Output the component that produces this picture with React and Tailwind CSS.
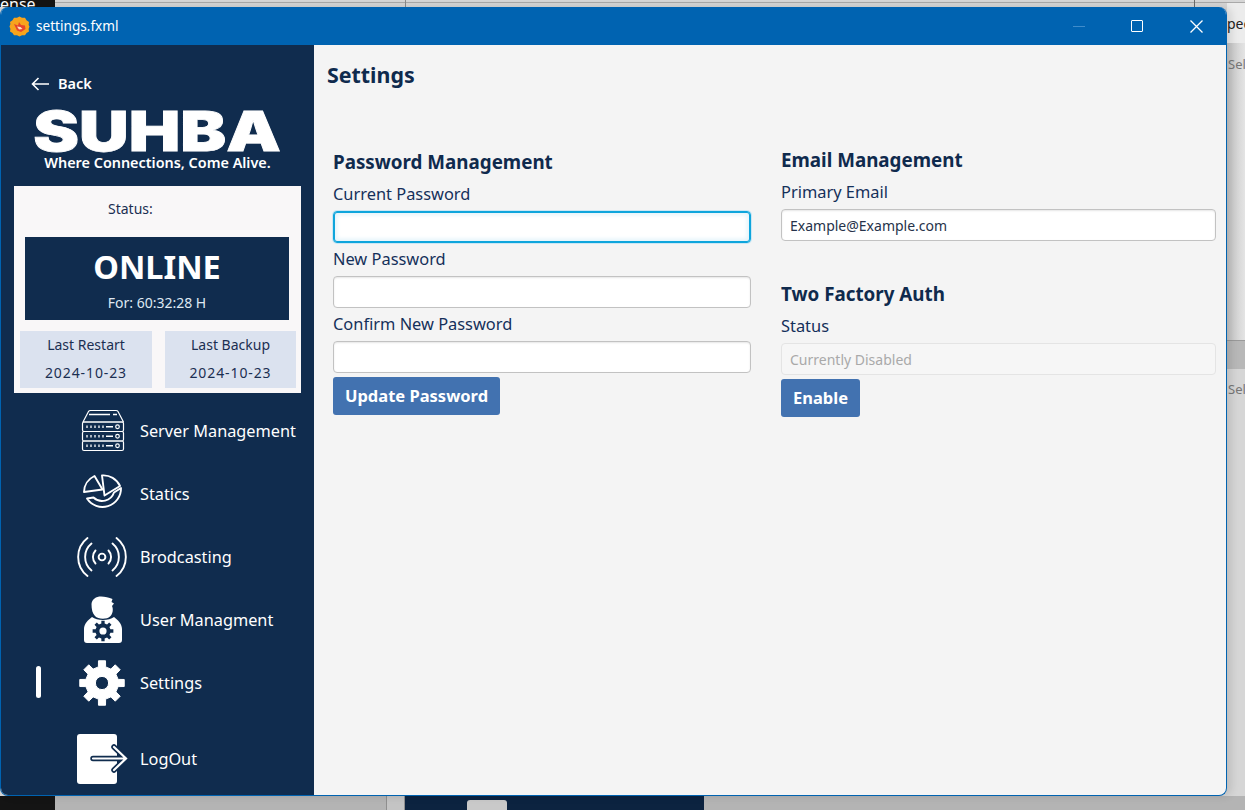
import React from "react";

const gearPath = (cx, cy, outer, inner, hole, teeth) => {
  const pts = [];
  const step = (Math.PI * 2) / teeth;
  for (let i = 0; i < teeth; i++) {
    const a = i * step - Math.PI / 2;
    const w = step * 0.2;
    const w2 = step * 0.28;
    pts.push([a - w2, inner], [a - w, outer], [a + w, outer], [a + w2, inner]);
  }
  const d = pts
    .map(([a, r], i) => `${i ? "L" : "M"}${(cx + Math.cos(a) * r).toFixed(2)} ${(cy + Math.sin(a) * r).toFixed(2)}`)
    .join(" ");
  return `${d} Z M${cx - hole} ${cy} a${hole} ${hole} 0 1 0 ${hole * 2} 0 a${hole} ${hole} 0 1 0 ${-hole * 2} 0 Z`;
};

const ServerIcon = () => (
  <svg width="44" height="43" viewBox="0 0 44 43" fill="none" stroke="white" strokeWidth="1.2" strokeLinejoin="round">
    <path d="M2 13 L7.5 2.5 Q8 1.5 9.5 1.5 H35 Q36.5 1.5 37 2.5 L42.5 13 Z" />
    <path d="M8 5.5 H29 M32 5.5 H36" strokeWidth="1.4" />
    {[13, 22.5, 32].map((y) => (
      <g key={y}>
        <rect x="1.5" y={y} width="41" height={9.5} rx="1.5" />
        <path d={`M6 ${y + 3.6} v2.4 M10 ${y + 3.6} v2.4 M14 ${y + 3.6} v2.4 M18 ${y + 3.6} v2.4 M22 ${y + 3.6} v2.4`} strokeWidth="1.3" />
        <path d={`M25 ${y + 4.75} H32`} strokeWidth="1.5" />
        <circle cx="36.5" cy={y + 4.75} r="1.8" />
      </g>
    ))}
  </svg>
);

const PieIcon = () => (
  <svg width="42" height="42" viewBox="0 0 42 42" fill="none" stroke="white" strokeWidth="1.9" strokeLinejoin="round">
    <path d="M2 19 A18 18 0 0 1 12.5 3 L20.5 16.5 Z" />
    <path d="M20 2.5 A18 18 0 0 1 38 13 L22.5 22.5 Z" />
    <path d="M5 25.5 L11.5 24.5 A12.5 12.5 0 0 0 32 19.5 L39 15 A18.5 18.5 0 0 1 5 25.5 Z" />
  </svg>
);

const BroadcastIcon = () => (
  <svg className="-ml-[2px]" width="52" height="44" viewBox="0 0 52 44" fill="none" stroke="white" strokeWidth="1.9" strokeLinecap="round">
    <circle cx="26" cy="22" r="3.4" />
    <path d="M19.5 15.5 A9.5 9.5 0 0 0 19.5 28.5 M32.5 15.5 A9.5 9.5 0 0 1 32.5 28.5" />
    <path d="M15.5 8.5 A17.5 17.5 0 0 0 15.5 35.5 M36.5 8.5 A17.5 17.5 0 0 1 36.5 35.5" />
    <path d="M11.5 3 A24 24 0 0 0 11.5 41 M40.5 3 A24 24 0 0 1 40.5 41" />
  </svg>
);

const UserGearIcon = () => (
  <svg width="40" height="48" viewBox="0 0 40 48">
    <path fill="white" d="M8.5 8 C9 3 13 0.5 18 0.5 C22 0.5 26 1.5 29.5 3 L28.5 6 L31 7.5 L29 10 C30.5 13 30 18 27 20.5 C24 23.5 15 23.5 12 20 C9.5 17.5 8.5 13.5 8.5 8 Z" />
    <path fill="white" d="M9 21 C5 24 1 28 1 33 V44 Q1 47 4 47 H36 Q39 47 39 44 V33 C39 28 35 24 31 21 C26 25 14 25 9 21 Z" />
    <path fill="#102c4e" fillRule="evenodd" d={gearPath(20, 35, 10.5, 7.6, 3.6, 8)} />
  </svg>
);

const GearIcon = () => (
  <svg className="-ml-[2px]" width="46" height="46" viewBox="0 0 46 46">
    <path fill="white" fillRule="evenodd" stroke="white" strokeWidth="1" strokeLinejoin="round" d={gearPath(23, 23, 22.5, 16.5, 6.6, 8)} />
  </svg>
);

const LogoutIcon = () => (
  <svg width="52" height="50" viewBox="0 0 52 50" fill="none">
    <rect x="0" y="0" width="40" height="50" rx="3" fill="white" />
    <path d="M16 24.5 H48 M37 13 L49 24.5 L37 36" stroke="#102c4e" strokeWidth="5.5" strokeLinecap="round" strokeLinejoin="miter" />
    <path d="M16 24.5 H48 M37 13 L49 24.5 L37 36" stroke="white" strokeWidth="2.2" strokeLinecap="round" strokeLinejoin="miter" />
  </svg>
);

const NavRow = ({ icon, label, active, className = "" }) => (
  <div className={`relative flex h-[63px] items-center ${className}`}>
    {active && <span className="absolute left-[35px] top-[15px] h-[32px] w-[5px] rounded-full bg-white" />}
    <span className="flex w-[139px] shrink-0 justify-center pl-[64px]">{icon}</span>
    <span className="text-[16.3px] leading-6 text-white">{label}</span>
  </div>
);

const Label = ({ children, className = "" }) => (
  <div className={`flex items-center text-[16.4px] leading-6 text-[#14305a] ${className}`}>{children}</div>
);

const Heading = ({ children, className = "" }) => (
  <div className={`flex h-7 items-center text-[18.8px] font-bold text-[#0f2a4d] ${className}`}>{children}</div>
);

const Field = ({ focused, value, disabled }) => (
  <div
    className={`flex h-8 items-center rounded-[4px] border px-2 text-[14px] ${
      focused
        ? "border-[#0ea5dc] bg-white shadow-[0_0_0_1px_#cbe7f4,inset_0_0_0_1px_#0ea5dc,inset_0_0_4px_3px_#e3f3fa]"
        : disabled
          ? "border-[#e4e4e4] bg-[#f6f6f6] text-[#a9a9a9]"
          : "border-[#c2c2c2] bg-white text-[#26324a] shadow-[inset_0_1px_2px_#e6e6e6]"
    }`}
  >
    {value}
  </div>
);

const Btn = ({ children, className = "" }) => (
  <button className={`mt-1 flex h-[38px] items-center justify-center rounded-[3px] bg-[#4272b0] text-[16.5px] font-bold text-white ${className}`}>
    {children}
  </button>
);

const Tile = ({ title, date, className = "" }) => (
  <div className={`flex h-[57px] flex-col items-center bg-[#dbe2ef] text-[14px] leading-5 text-[#1b2f52] ${className}`}>
    <span className="mt-[4px]">{title}</span>
    <span className="mt-[8px] tracking-[0.9px]">{date}</span>
  </div>
);

export default function App() {
  return (
    <div className="relative h-[810px] w-[1245px] overflow-hidden bg-[#d6d6d6] font-['Noto_Sans',sans-serif]">
      {/* desktop behind the window */}
      <div className="absolute left-0 top-0 h-[7px] w-[55px] overflow-hidden bg-[#141414] text-[16px] leading-[8px] text-white">ense</div>
      <div className="absolute left-[55px] top-[2px] h-[1px] w-[1190px] bg-[#a9a9a9]" />
      <div className="absolute left-[405px] top-0 h-[7px] w-[1px] bg-[#8a8a8a]" />
      <div className="absolute left-[1194px] top-0 h-[7px] w-[1px] bg-[#6a6a6a]" />
      <div className="absolute left-[1227px] top-[3px] h-[40px] w-[18px] overflow-hidden bg-[#ececec] pt-[13px] text-[14px] leading-4 text-[#222]">pec</div>
      <div className="absolute left-[1227px] top-[43px] h-[297px] w-[18px] bg-gradient-to-r from-[#c4c4c4] to-[#e4e4e4]" />
      <div className="absolute left-[1228px] top-[56px] text-[13px] leading-4 text-[#777]">Sel</div>
      <div className="absolute left-[1227px] top-[340px] h-[29px] w-[18px] border-t border-[#9a9a9a] bg-[#b8b8b8]" />
      <div className="absolute left-[1228px] top-[381px] text-[13px] leading-4 text-[#777]">Sel</div>
      <div className="absolute bottom-0 left-0 h-[14px] w-[55px] bg-[#141414]" />
      <div className="absolute bottom-0 left-[55px] h-[14px] w-[331px] bg-[#b4b4b4]" />
      <div className="absolute bottom-0 left-[386px] h-[14px] w-[19px] border-x border-[#8f8f8f] bg-[#c4c4c4]" />
      <div className="absolute bottom-0 left-[405px] h-[14px] w-[299px] bg-[#0c2340]">
        <div className="absolute left-[62px] top-[4px] h-[10px] w-[40px] rounded-t-[3px] bg-[#c9c9c9]" />
      </div>
      <div className="absolute bottom-0 left-[704px] h-[14px] w-[541px] bg-[#b4b4b4]" />

      {/* window */}
      <div className="absolute left-0 top-[7px] flex h-[789px] w-[1227px] flex-col overflow-hidden rounded-[8px] border border-t-0 border-[#0063b1] bg-[#f4f4f4] shadow-[4px_0_8px_rgba(0,0,0,0.12)]">
        <div className="flex h-[38px] shrink-0 items-center bg-[#0063b1] pl-[8px] text-white">
          <svg width="21" height="21" viewBox="0 0 21 21">
            <path fill="#f7a41d" d="M10.5 .5 13 1.8 16 1.8 17.5 4.3 20 6 19.6 9 20.5 10.5 19.6 13 20 15.5 17.5 17 16 19.2 13 19.2 10.5 20.5 8 19.2 5 19.2 3.5 17 1 15.5 1.4 13 .5 10.5 1.4 8 1 6 3.5 4.3 5 1.8 8 1.8Z" />
            <path fill="#e8452c" d="M5 8 L9 9.5 L10 6 L12 9 L16 9.5 L16.5 13 L12 16 L8 14.5 Z" />
            <path fill="#fbe3c0" d="M8 10.5 L11.5 11 L13.5 13 L10 13.5 Z" />
          </svg>
          <span className="ml-[6px] text-[13.6px] leading-5">settings.fxml</span>
          <div className="ml-auto flex items-center">
            <span className="mr-[46px] h-[1px] w-[12px] bg-[#3f8ccb]" />
            <span className="mr-[47px] h-[12px] w-[12px] rounded-[1px] border-[1.5px] border-white" />
            <svg className="mr-[23px]" width="13" height="13" viewBox="0 0 13 13" stroke="white" strokeWidth="1.3">
              <path d="M.5 .5 12.5 12.5 M12.5 .5 .5 12.5" />
            </svg>
          </div>
        </div>

        <div className="flex min-h-0 flex-1">
          <aside className="flex w-[313px] shrink-0 flex-col bg-[#102c4e]">
            <div className="mt-[27px] flex h-6 items-center pl-[30px] text-white">
              <svg width="18" height="14" viewBox="0 0 18 14" fill="none" stroke="white" strokeWidth="1.6">
                <path d="M18 7 H1.5 M7.5 1 L1.5 7 L7.5 13" />
              </svg>
              <span className="ml-[9px] text-[14.5px] font-semibold">Back</span>
            </div>
            <div className="mt-[15px] flex h-10 justify-center pr-[1px] font-['Inter',sans-serif] text-[55px] font-black leading-[40px] text-white">
              <span className="inline-block h-10 scale-x-[1.25] [-webkit-text-stroke:0.8px_white]">SUHBA</span>
            </div>
            <div className="mt-[2px] flex h-5 items-center justify-center text-[14.4px] font-semibold text-white">Where Connections, Come Alive.</div>

            <div className="ml-[13px] mt-[13px] flex h-[207px] w-[287px] flex-col bg-[#f9f7f8] pt-[13px]">
              <div className="h-5 pl-[94px] text-[14px] leading-5 text-[#1b2f52]">Status:</div>
              <div className="ml-[11px] mt-[18px] flex h-[83px] w-[264px] flex-col items-center bg-[#102c4e] text-white">
                <span className="mt-[9px] text-[32.5px] font-bold leading-[42px]">ONLINE</span>
                <span className="mt-[3px] pt-[2px] text-[14px] leading-5 text-[#dfe8f2]">For: 60:32:28 H</span>
              </div>
              <div className="ml-[6px] mt-[11px] flex gap-[13px]">
                <Tile title="Last Restart" date="2024-10-23" className="w-[132px]" />
                <Tile title="Last Backup" date="2024-10-23" className="w-[131px]" />
              </div>
            </div>

            <div className="mt-[6px] flex flex-col">
              <NavRow icon={<ServerIcon />} label="Server Management" />
              <NavRow icon={<PieIcon />} label="Statics" />
              <NavRow icon={<BroadcastIcon />} label="Brodcasting" />
              <NavRow icon={<UserGearIcon />} label="User Managment" />
              <NavRow icon={<GearIcon />} label="Settings" active />
              <NavRow icon={<LogoutIcon />} label="LogOut" className="mt-[13px]" />
            </div>
          </aside>

          <main className="min-w-0 flex-1">
            <h1 className="ml-[13px] mt-[15px] h-[30px] text-[21.4px] font-bold leading-[30px] text-[#0f2a4d]">Settings</h1>
            <div className="flex">
              <section className="ml-[19px] mt-[58px] flex w-[418px] shrink-0 flex-col">
                <Heading>Password Management</Heading>
                <Label className="h-[35px]">Current Password</Label>
                <Field focused />
                <Label className="h-[33px] pb-[1px]">New Password</Label>
                <Field />
                <Label className="h-[33px] pb-[1px]">Confirm New Password</Label>
                <Field />
                <Btn className="w-[167px]">Update Password</Btn>
              </section>
              <section className="ml-[30px] mt-[56px] flex w-[435px] shrink-0 flex-col">
                <Heading>Email Management</Heading>
                <Label className="h-[35px]">Primary Email</Label>
                <Field value="Example@Example.com" />
                <Heading className="mt-[39px]">Two Factory Auth</Heading>
                <Label className="h-[35px]">Status</Label>
                <Field value="Currently Disabled" disabled />
                <Btn className="w-[79px]">Enable</Btn>
              </section>
            </div>
          </main>
        </div>
      </div>
    </div>
  );
}
